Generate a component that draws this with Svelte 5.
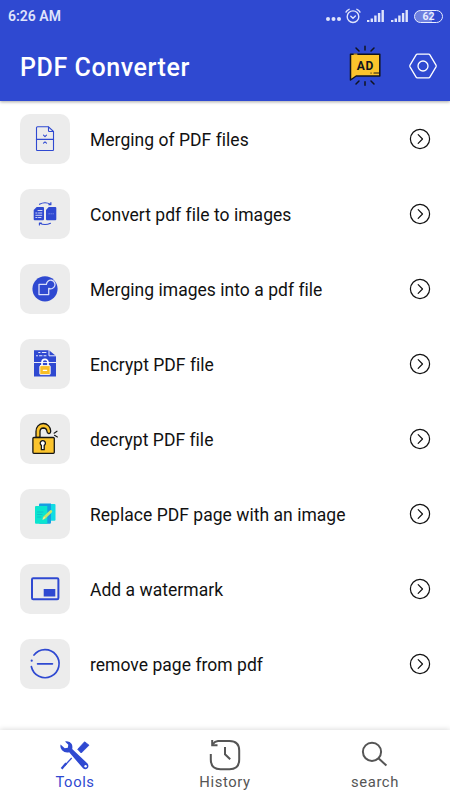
<script lang="ts">
  type Tool = { id: string; label: string };

  const tools: Tool[] = [
    { id: "merge", label: "Merging of PDF files" },
    { id: "to-images", label: "Convert pdf file to images" },
    { id: "from-images", label: "Merging images into a pdf file" },
    { id: "encrypt", label: "Encrypt PDF file" },
    { id: "decrypt", label: "decrypt PDF file" },
    { id: "replace", label: "Replace PDF page with an image" },
    { id: "watermark", label: "Add a watermark" },
    { id: "remove", label: "remove page from pdf" },
  ];

  const tabs = [
    { id: "tools", label: "Tools" },
    { id: "history", label: "History" },
    { id: "search", label: "search" },
  ];

  let active = $state("tools");
</script>

{#snippet signal()}
  <svg class="signal" width="17" height="12" viewBox="0 0 17 12">
    <path d="M0 12v-2h2.4v2zM3.6 12V8.5H6V12zM7.2 12V5.5h2.4V12zM10.9 12V3h2.4v9zM14.5 12V0h2.4v12z" fill="currentColor" />
  </svg>
{/snippet}

{#snippet toolIcon(id: string)}
  <svg width="50" height="50" viewBox="0 0 50 50" fill="none" stroke-linecap="round" stroke-linejoin="round">
    {#if id === "merge"}
      <g stroke="#2f49d1" stroke-width="1.1">
        <path d="M17.5 12.8H28.5L33.5 17.5V35.8Q33.5 36.5 32.8 36.5H17.2Q16.5 36.5 16.5 35.8V13.8Q16.5 12.8 17.5 12.8Z" />
        <path d="M28.5 13V16.7Q28.5 17.5 29.3 17.5H33.3" />
        <path d="M16.5 25.4H33.5" stroke-width="1.2" />
        <path d="M23.5 21.2 25 22.6 26.5 21.2M23.5 29.2 25 27.8 26.5 29.2" />
      </g>
    {:else if id === "to-images"}
      <path d="M16.7 18H23Q24 18 24 19V30.3Q24 31.3 23 31.3H14.7Q13.7 31.3 13.7 30.3V21Z" fill="#2f49d1" />
      <path d="M28.7 18H35.3Q36.3 18 36.3 19V30.3Q36.3 31.3 35.3 31.3H27Q26 31.3 26 30.3V21Z" fill="#2f49d1" />
      <path d="M18 21.5H22M15.8 24H17M18.5 24H21.8M15.8 26.3H21.8M15.8 28.5H17M18.5 28.5H21" stroke="#dfe3fa" stroke-width=".9" />
      <path d="M29 24.8h.3M31 24.8h.3M33 24.8h.3" stroke="#9daaf0" stroke-width=".8" />
      <path d="M19.5 15.3Q25 12.2 30.5 15.3M30.9 13.5V15.7H28.8M30.5 34.3Q25 36.8 19.7 34.3M19.4 36V34H21.4" stroke="#2f49d1" stroke-width="1.1" />
    {:else if id === "from-images"}
      <circle cx="25" cy="24.8" r="12.6" fill="#2f49d1" />
      <path d="M26.4 20.4H19V30.6H28.7V24.3A4.3 4.3 0 1 0 26.4 20.4Z" stroke="#d9defa" stroke-width="1.3" />
    {:else if id === "encrypt"}
      <path d="M14 11.2H29L36 17V37.4H14Z" fill="#2f49d1" />
      <path d="M29 11.2V16.8H36" stroke="#e8ebfb" stroke-width="1" />
      <path d="M14 23.5H36" stroke="#e8ebfb" stroke-width="1" />
      <path d="M18.7 13.5H20M22.3 13.5H26M16.5 16.7H17.5M19.5 16.7H22M24 16.7H26" stroke="#e8ebfb" stroke-width="1.1" />
      <path d="M22 27V23.5A3 3.2 0 0 1 28 23.5V27" stroke="#fff" stroke-width="1.7" />
      <rect x="19.8" y="26.6" width="10.4" height="9" rx=".8" fill="#f8be27" stroke="#fff" stroke-width=".9" />
      <path d="M23.3 31.3H26.7" stroke="#fff" stroke-width="1.2" />
    {:else if id === "decrypt"}
      <g stroke="#151515" stroke-width="1.3">
        <path d="M16 23.5V17.5A7.2 7.6 0 0 1 30.7 17Q30.6 19.6 28.8 19.5Q27 19.3 27 17.5Q26.6 14 23.4 14Q20 14.2 20 17.7V23.5Z" fill="#fbc42d" />
        <rect x="12.9" y="23.5" width="21.4" height="15.8" rx="1" fill="#fbc42d" />
        <path d="M21.4 35.7V31.4A2.6 2.6 0 1 1 24.2 31.4V35.7Z" fill="#fff" />
        <path d="M34.1 19.2 37 17.2M34.5 21.3 37.4 22.9" stroke-width="1.1" />
      </g>
    {:else if id === "replace"}
      <rect x="27" y="15" width="8.5" height="16.7" rx="1" fill="#12dbe4" />
      <path d="M20 14.5H31V33.5Q31 34.8 29.7 34.8H20Q19 34.8 19 33.8V15.5Q19 14.5 20 14.5Z" fill="#169fe2" />
      <path d="M16 17H27.3V34.7H16Q15 34.7 15 33.7V18Q15 17 16 17Z" fill="#0be5cf" />
      <path d="M17.5 23H23M17.5 25.5H22M17.5 28H21" stroke="#10b8c8" stroke-width=".8" />
      <path d="M24.2 28.8 30.8 22.5" stroke="#c8e568" stroke-width="2.8" />
      <path d="M23 30.2 24.5 28.7" stroke="#f4e6a0" stroke-width="1.2" />
    {:else if id === "watermark"}
      <rect x="12" y="14.2" width="26.4" height="21" rx="1.2" stroke="#2f49d1" stroke-width="2" />
      <rect x="23.7" y="25" width="11.6" height="7.5" fill="#2f49d1" />
    {:else if id === "remove"}
      <g stroke="#2f49d1" stroke-width="1.7">
        <path d="M14 16.1A14 14 0 1 1 11.4 27.7" />
        <path d="M17.6 24.8H32.4" />
      </g>
      <circle cx="11.7" cy="21.7" r="1.1" fill="#2f49d1" />
    {/if}
  </svg>
{/snippet}

<div class="screen">
  <header class="top">
    <div class="status">
      <span class="time">6:26 AM</span>
      <svg class="dots" width="15" height="4" viewBox="0 0 15 4" fill="currentColor">
        <circle cx="2" cy="2" r="2" /><circle cx="7.5" cy="2" r="2" /><circle cx="13" cy="2" r="2" />
      </svg>
      <svg class="alarm" width="16" height="16" viewBox="0 0 16 16" fill="none" stroke="currentColor" stroke-width="1.4" stroke-linecap="round">
        <circle cx="8" cy="8.7" r="5.8" />
        <path d="M5.8 8.2 8 10.2 10.4 8M1 4.1Q2 2 4.1 1.3M15 4.1Q14 2 11.9 1.3" />
      </svg>
      {@render signal()}
      {@render signal()}
      <span class="battery">62</span>
    </div>

    <div class="bar">
      <h1>PDF Converter</h1>
      <button type="button" class="ad" aria-label="Ads">
        <svg width="34" height="42" viewBox="0 0 34 42" stroke="#10131f" stroke-width="1.5" stroke-linecap="round" stroke-linejoin="round">
          <path d="M17 1.3V5M8 3 11 6M26 3 23 6M17 36.7V40.3M8 39 11 36M26 39 23 36" />
          <path d="M2.5 9.2H31.8V31H8.2L2.5 35Z" fill="#fcc42c" />
          <path d="M26 28H31M23 28h.1" stroke-width="1.2" />
          <path d="M6 9.2h3" stroke="#fcc42c" stroke-width="1" />
          <text x="17.3" y="24.6">AD</text>
        </svg>
      </button>
      <button type="button" class="settings" aria-label="Settings">
        <svg width="28" height="26" viewBox="0 0 28 26" fill="none" stroke="currentColor" stroke-width="1.3" stroke-linejoin="round">
          <path d="M8.3 1.2H19.7Q20.5 1.2 20.9 1.9L27 12.2Q27.4 13 27 13.8L20.9 24.1Q20.5 24.8 19.7 24.8H8.3Q7.5 24.8 7.1 24.1L1 13.8Q.6 13 1 12.2L7.1 1.9Q7.5 1.2 8.3 1.2Z" />
          <circle cx="14" cy="13" r="5" />
        </svg>
      </button>
    </div>
  </header>

  <main class="list">
    {#each tools as tool (tool.id)}
      <button type="button" class="row">
        <span class="tile">{@render toolIcon(tool.id)}</span>
        <span class="label">{tool.label}</span>
        <svg class="go" width="22" height="22" viewBox="0 0 22 22" fill="none" stroke="#111" stroke-width="1.2" stroke-linecap="round" stroke-linejoin="round">
          <circle cx="11" cy="11" r="9.6" />
          <path d="M9.2 6.7 13.5 11 9.2 15.3" />
        </svg>
      </button>
    {/each}
  </main>

  <nav class="tabs">
    {#each tabs as tab (tab.id)}
      <button type="button" class="tab" class:active={active === tab.id} onclick={() => (active = tab.id)}>
        <svg width="32" height="32" viewBox="0 0 32 32" fill="none" stroke="currentColor" stroke-width="2">
          {#if tab.id === "tools"}
            <path d="M18.7 10.3 25.6 2.8 30 6.2 22.2 14Z" fill="currentColor" stroke="currentColor" stroke-width=".8" stroke-linejoin="round" />
            <path d="M12.7 19 5.5 26.8" stroke-width="1.3" />
            <path d="M7.2 24.2 2.6 29.7" stroke-width="2.2" />
            <path
              d="M6 2.5Q10.5 1.5 12.7 5Q13.8 7.5 13.2 10L28.5 24.5Q30.3 27 28.6 29.3Q26.2 31.3 24 29.3L10.2 13.3Q6 14.3 3 11.3Q.8 8.5 1.6 5.6L5.7 9.3L8.8 8.7L9.3 5.7Z"
              fill="currentColor" stroke="none"
            />
            <circle cx="26.6" cy="27.3" r="1.2" fill="#fff" stroke="none" />
          {:else if tab.id === "history"}
            <path d="M1.8 15V20.5Q1.8 30.2 11.5 30.2H20.5Q30.2 30.2 30.2 20.5V11.5Q30.2 2 20.5 2H9Q6 2.3 3.5 5.3" />
            <path d="M3.2 1V6.2H8.5" />
            <path d="M16 8V15.2L21.2 20.2" />
          {:else}
            <circle cx="13" cy="12.8" r="9.1" />
            <path d="M19.5 19.3 27.4 26.6" />
          {/if}
        </svg>
        <span>{tab.label}</span>
      </button>
    {/each}
  </nav>
</div>

<style>
  :global(body) {
    background: #fff;
    overflow: hidden;
  }

  .screen {
    width: 450px;
    height: 800px;
    display: flex;
    flex-direction: column;
    background: #fff;
    font-family: Roboto, "Liberation Sans", sans-serif;
  }

  button {
    margin: 0;
    padding: 0;
    border: none;
    background: transparent;
    color: inherit;
    font: inherit;
    cursor: pointer;
  }

  svg {
    display: block;
    flex: none;
  }

  .top {
    height: 101px;
    flex: none;
    background: #2f49d1;
    color: #fff;
    box-shadow: 0 1px 3px rgba(0, 0, 0, 0.35);
  }

  .status {
    height: 32px;
    padding: 0 7px 0 8px;
    display: flex;
    align-items: center;
    color: #dfe4fb;
  }

  .time {
    flex: 1;
    font-size: 14px;
    font-weight: 600;
  }

  .dots {
    margin: 6px 4px 0 0;
  }

  .alarm {
    margin-right: 6px;
  }

  .signal {
    margin-right: 6.5px;
  }

  .battery {
    box-sizing: border-box;
    width: 29px;
    height: 13px;
    border: 1.3px solid currentColor;
    border-radius: 7px;
    background: linear-gradient(90deg, rgba(255, 255, 255, 0.3) 64%, transparent 64%);
    color: #e8ecff;
    font-size: 10.5px;
    font-weight: 700;
    line-height: 11px;
    text-align: center;
  }

  .bar {
    height: 69px;
    padding: 0 13px 0 20px;
    display: flex;
    align-items: center;
  }

  h1 {
    flex: 1;
    margin: 2px 0 0;
    font-size: 25px;
    font-weight: 500;
    letter-spacing: 0.58px;
  }

  .ad {
    margin: 0 27px 1px 0;
  }

  .settings {
    margin-bottom: 2px;
  }

  .ad text {
    font-family: Roboto, sans-serif;
    font-size: 12px;
    font-weight: 700;
    letter-spacing: 0.6px;
    text-anchor: middle;
    fill: #10131f;
    stroke: none;
  }

  .list {
    flex: 1;
  }

  .row {
    box-sizing: border-box;
    width: 100%;
    height: 75px;
    padding: 1px 19px 0 20px;
    display: flex;
    align-items: center;
    text-align: left;
  }

  .tile {
    width: 50px;
    height: 50px;
    border-radius: 10px;
    background: #ececec;
  }

  .label {
    flex: 1;
    margin: 1px 0 0 20px;
    font-size: 17.5px;
    letter-spacing: 0.03px;
    color: #111;
  }

  .tabs {
    height: 70px;
    flex: none;
    display: flex;
    background: #fff;
    box-shadow: 0 -1px 5px rgba(0, 0, 0, 0.13);
  }

  .tab {
    flex: 1;
    padding-top: 9px;
    display: flex;
    flex-direction: column;
    align-items: center;
    gap: 2px;
    color: #555;
    font-size: 14.8px;
    line-height: 18px;
    letter-spacing: 0.6px;
  }

  .tab.active {
    color: #2f49d1;
  }
</style>
